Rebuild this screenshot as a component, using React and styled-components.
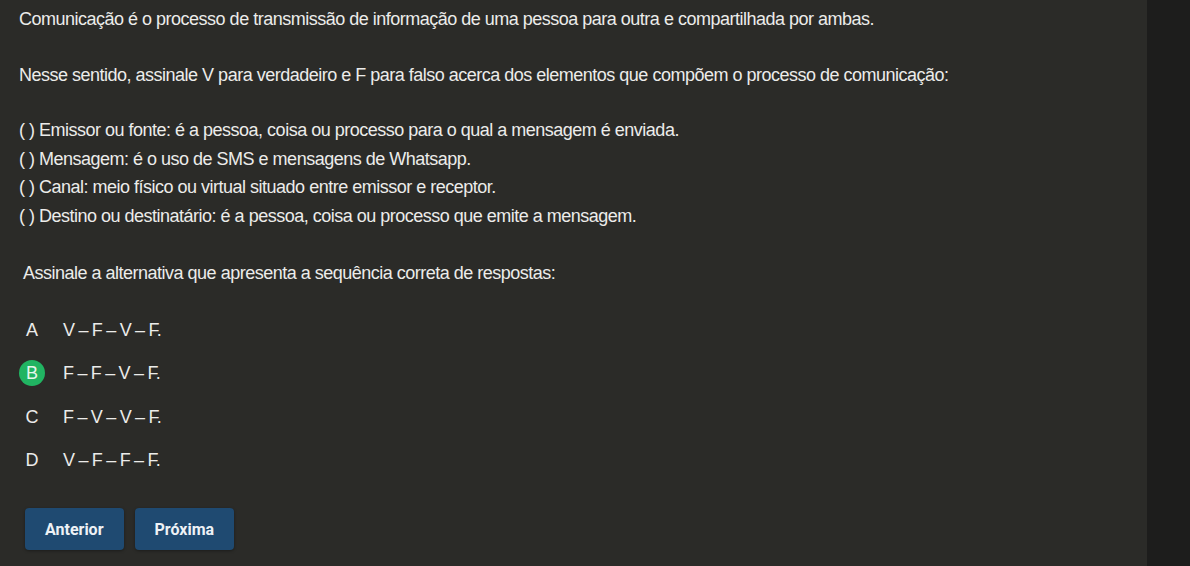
import React from "react";
import styled, { createGlobalStyle } from "styled-components";

const Global = createGlobalStyle`
  html, body {
    margin: 0;
    padding: 0;
    background: #1d1d1c;
  }
`;

const options = [
  { letter: "A", text: "V – F – V – F." },
  { letter: "B", text: "F – F – V – F.", selected: true },
  { letter: "C", text: "F – V – V – F." },
  { letter: "D", text: "V – F – F – F." },
];

export default function App() {
  return (
    <>
      <Global />
      <Page>
        <Panel>
          <Para>
            Comunicação é o processo de transmissão de informação de uma pessoa para outra e compartilhada por ambas.
          </Para>
          <Para>
            Nesse sentido, assinale V para verdadeiro e F para falso acerca dos elementos que compõem o processo de comunicação:
          </Para>
          <List>
            <li>( ) Emissor ou fonte: é a pessoa, coisa ou processo para o qual a mensagem é enviada.</li>
            <li>( ) Mensagem: é o uso de SMS e mensagens de Whatsapp.</li>
            <li>( ) Canal: meio físico ou virtual situado entre emissor e receptor.</li>
            <li>( ) Destino ou destinatário: é a pessoa, coisa ou processo que emite a mensagem.</li>
          </List>
          <Question>Assinale a alternativa que apresenta a sequência correta de respostas:</Question>
          <Options>
            {options.map((o) => (
              <Option key={o.letter}>
                <Letter $selected={o.selected}>{o.letter}</Letter>
                <span>{o.text}</span>
              </Option>
            ))}
          </Options>
          <Actions>
            <NavButton>Anterior</NavButton>
            <NavButton>Próxima</NavButton>
          </Actions>
        </Panel>
        <Side />
      </Page>
    </>
  );
}

const Page = styled.div`
  display: flex;
  height: 566px;
  overflow: hidden;
`;

const Panel = styled.div`
  width: 1147px;
  flex-shrink: 0;
  background: #2b2b28;
  box-sizing: border-box;
  padding: 5px 0 0 19px;
  color: #ececea;
  font-family: "Liberation Sans", Arial, sans-serif;
  font-size: 18px;
  letter-spacing: -0.5px;
  line-height: 28.6px;
`;

const Side = styled.div`
  flex: 1;
  background: #1d1d1c;
`;

const Para = styled.p`
  margin: 0 0 27px;
`;

const List = styled.ul`
  list-style: none;
  margin: 0 0 28px;
  padding: 0;
`;

const Question = styled.p`
  margin: 0 0 21px;
  padding-left: 4px;
`;

const Options = styled.div`
  display: flex;
  flex-direction: column;
`;

const Option = styled.div`
  display: flex;
  align-items: center;
  gap: 18px;
  height: 43.5px;
  letter-spacing: -0.8px;
`;

const Letter = styled.span`
  width: 26px;
  height: 26px;
  border-radius: 50%;
  display: flex;
  align-items: center;
  justify-content: center;
  letter-spacing: 0;
  background: ${(p) => (p.$selected ? "#21b462" : "transparent")};
  color: ${(p) => (p.$selected ? "#e6f6ec" : "#ececea")};
`;

const Actions = styled.div`
  display: flex;
  gap: 11px;
  margin: 26px 0 0 6px;
`;

const NavButton = styled.button`
  height: 42px;
  padding: 0 20px;
  border: none;
  border-radius: 4px;
  background: #1f4a71;
  color: #eef2f6;
  font-family: Roboto, "Liberation Sans", sans-serif;
  font-weight: 700;
  font-size: 16px;
  letter-spacing: 0;
  box-shadow: 0 1px 3px rgba(0, 0, 0, 0.35);
  cursor: pointer;
`;
